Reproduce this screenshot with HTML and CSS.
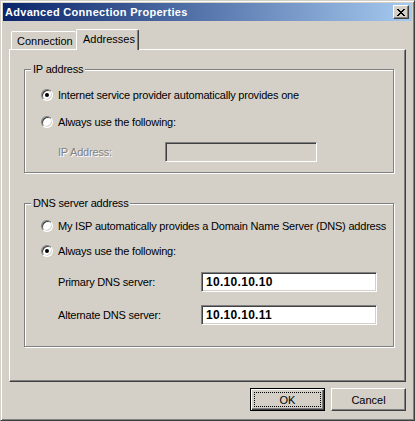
FILE: index.html
```html
<!DOCTYPE html>
<html lang="en">
<head>
    <meta charset="UTF-8">
    <title>Advanced Connection Properties</title>
    <link rel="stylesheet" href="styles.css">
</head>
<body>
    <div class="window">
        <div class="titlebar">
            <span class="title">Advanced Connection Properties</span>
            <button class="close" title="Close">
                <svg width="8" height="7" viewBox="0 0 8 7">
                    <path fill="#000" d="M0 0h2v1H0zM6 0h2v1H6zM1 1h2v1H1zM5 1h2v1H5zM2 2h4v1H2zM3 3h2v1H3zM2 4h4v1H2zM1 5h2v1H1zM5 5h2v1H5zM0 6h2v1H0zM6 6h2v1H6z"/>
                </svg>
            </button>
        </div>

        <div class="tabs">
            <div class="tab">Connection</div>
            <div class="tab selected">Addresses</div>
        </div>

        <div class="panel">
            <fieldset class="group group-ip">
                <legend>IP address</legend>
                <div class="row radio-row first">
                    <span class="radio checked"></span>
                    <span class="radio-label">Internet service provider automatically provides one</span>
                </div>
                <div class="row radio-row">
                    <span class="radio"></span>
                    <span class="radio-label">Always use the following:</span>
                </div>
                <div class="row field-row ip-row">
                    <span class="field-label disabled">IP Address:</span>
                    <input class="field ip-field" type="text" disabled>
                </div>
            </fieldset>

            <fieldset class="group group-dns">
                <legend>DNS server address</legend>
                <div class="row radio-row first">
                    <span class="radio"></span>
                    <span class="radio-label">My ISP automatically provides a Domain Name Server (DNS) address</span>
                </div>
                <div class="row radio-row second">
                    <span class="radio checked"></span>
                    <span class="radio-label">Always use the following:</span>
                </div>
                <div class="row field-row dns-row">
                    <span class="field-label">Primary DNS server:</span>
                    <input class="field dns-field" type="text" value="10.10.10.10">
                </div>
                <div class="row field-row dns-row">
                    <span class="field-label">Alternate DNS server:</span>
                    <input class="field dns-field" type="text" value="10.10.10.11">
                </div>
            </fieldset>
        </div>

        <div class="actions">
            <button class="btn default"><span class="focus">OK</span></button>
            <button class="btn">Cancel</button>
        </div>
    </div>
</body>
</html>
```

FILE: styles.css
```css
body {
    margin: 0;
    font-family: "Liberation Sans", Arial, sans-serif;
    font-size: 11px;
    color: #000;
    background: #d4d0c8;
}

.window {
    width: 415px;
    height: 421px;
    box-sizing: border-box;
    background: #d4d0c8;
    border: 1px solid;
    border-color: #d4d0c8 #404040 #404040 #d4d0c8;
    box-shadow: inset 1px 1px #fff, inset -1px -1px #808080;
    padding: 2px;
    display: flex;
    flex-direction: column;
}

/* title bar */
.titlebar {
    height: 18px;
    display: flex;
    align-items: center;
    padding: 0 3px 0 2px;
    background: linear-gradient(to right, #0a246a, #a6caf0);
    color: #fff;
    font-weight: bold;
}

.title {
    letter-spacing: 0.3px;
}

.close {
    margin-left: auto;
    width: 16px;
    height: 14px;
    padding: 0;
    box-sizing: border-box;
    background: #d4d0c8;
    border: 1px solid;
    border-color: #fff #404040 #404040 #fff;
    box-shadow: inset -1px -1px #808080;
    display: flex;
    align-items: center;
    justify-content: center;
}

.close svg {
    display: block;
}

/* tabs */
.tabs {
    display: flex;
    align-items: flex-end;
    height: 20px;
    margin: 8px 6px 0;
    padding-left: 2px;
}

.tab {
    height: 18px;
    box-sizing: border-box;
    display: flex;
    align-items: center;
    border-top: 1px solid #fff;
    border-left: 1px solid #fff;
    border-radius: 2px 2px 0 0;
    background: #d4d0c8;
}

.tab:first-child {
    width: 65px;
    padding-left: 5px;
}

.tab.selected {
    position: relative;
    z-index: 1;
    width: 63px;
    height: 21px;
    margin-bottom: -1px;
    padding: 0 0 2px 6px;
    border-right: 1px solid #404040;
    box-shadow: inset -1px 0 #808080;
}

/* tab page */
.panel {
    height: 333px;
    box-sizing: border-box;
    margin: 0 6px;
    padding-top: 13px;
    border: 1px solid;
    border-color: #fff #404040 #404040 #fff;
    box-shadow: inset -1px -1px #808080;
    letter-spacing: -0.2px;
}

.group {
    width: 370px;
    box-sizing: border-box;
    margin: 0 0 0 14px;
    padding: 0 0 0 6px;
    border: 1px solid #808080;
    box-shadow: 1px 1px #fff, inset 1px 1px #fff;
}

.group legend {
    padding: 0 2px;
    line-height: 13px;
    background: #d4d0c8;
}

.group-ip {
    padding-bottom: 10px;
}

.group-dns {
    margin-top: 24px;
    padding-bottom: 21px;
}

.row {
    display: flex;
    align-items: center;
    white-space: nowrap;
}

.radio-row {
    height: 16px;
    margin: 11px 0 0 10px;
}

.group-dns .radio-row.first {
    margin-top: 8px;
}

.group-dns .radio-row.second {
    margin-top: 9px;
}

.radio {
    position: relative;
    flex: none;
    width: 12px;
    height: 12px;
    box-sizing: border-box;
    border-radius: 50%;
    background: #fff;
    border: 1px solid;
    border-color: #808080 #fff #fff #808080;
    box-shadow: inset 1px 1px #404040, inset -1px -1px #d4d0c8;
}

.radio.checked::after {
    content: "";
    position: absolute;
    left: 3px;
    top: 3px;
    width: 4px;
    height: 4px;
    border-radius: 50%;
    background: #000;
}

.radio-label {
    margin-left: 5px;
}

.field-row {
    height: 20px;
    margin: 13px 0 0 27px;
}

.ip-row {
    margin-top: 12px;
}

.field-label {
    flex: none;
}

.ip-row .field-label {
    width: 107px;
}

.dns-row .field-label {
    width: 143px;
}

.field-label.disabled {
    color: #808080;
    text-shadow: 1px 1px #fff;
}

.field {
    height: 20px;
    box-sizing: border-box;
    margin: 0;
    padding: 0 0 0 4px;
    border: 1px solid;
    border-color: #808080 #fff #fff #808080;
    box-shadow: inset 1px 1px #404040, inset -1px -1px #d4d0c8;
    background: #fff;
    font-family: "Liberation Sans", Arial, sans-serif;
    font-size: 12px;
    font-weight: bold;
    letter-spacing: 0.3px;
    color: #000;
    outline: none;
}

.ip-field {
    width: 152px;
    background: #d4d0c8;
}

.dns-field {
    width: 176px;
}

/* buttons */
.actions {
    display: flex;
    justify-content: flex-end;
    gap: 6px;
    margin-top: 6px;
    padding-right: 6px;
}

.btn {
    width: 75px;
    height: 23px;
    box-sizing: border-box;
    padding: 0;
    background: #d4d0c8;
    font-family: "Liberation Sans", Arial, sans-serif;
    font-size: 11px;
    color: #000;
    border: 1px solid;
    border-color: #fff #404040 #404040 #fff;
    box-shadow: inset -1px -1px #808080;
}

.btn.default {
    padding: 3px;
    border-color: #000;
    box-shadow: inset 1px 1px #fff, inset -1px -1px #404040, inset -2px -2px #808080;
}

.focus {
    display: flex;
    align-items: center;
    justify-content: center;
    height: 100%;
    box-sizing: border-box;
    border: 1px dotted #000;
}
```
